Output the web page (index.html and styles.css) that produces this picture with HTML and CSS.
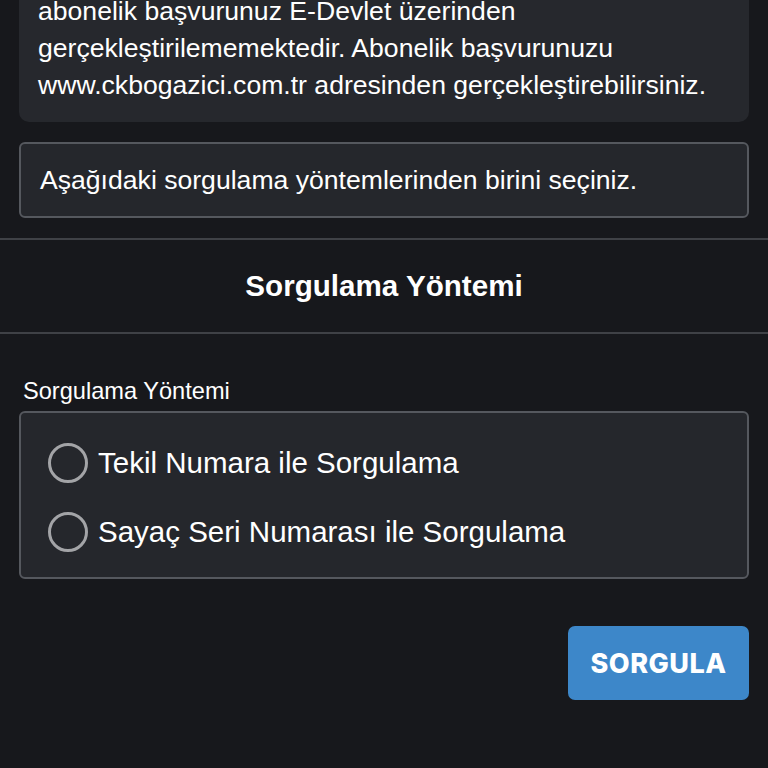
FILE: index.html
```html
<!DOCTYPE html>
<html lang="tr">
<head>
<meta charset="utf-8">
<link rel="stylesheet" href="styles.css">
</head>
<body>
<div class="page">
  <div class="notes">
    <div class="card info">abonelik başvurunuz E-Devlet üzerinden gerçekleştirilememektedir. Abonelik başvurunuzu www.ckbogazici.com.tr adresinden gerçekleştirebilirsiniz.</div>
    <div class="card hint">Aşağıdaki sorgulama yöntemlerinden birini seçiniz.</div>
  </div>
  <div class="section-head">Sorgulama Yöntemi</div>
  <div class="form">
    <div class="label">Sorgulama Yöntemi</div>
    <div class="radios">
      <label class="radio"><span class="dot"></span><span>Tekil Numara ile Sorgulama</span></label>
      <label class="radio"><span class="dot"></span><span>Sayaç Seri Numarası ile Sorgulama</span></label>
    </div>
    <div class="actions"><button class="btn">SORGULA</button></div>
  </div>
</div>
</body>
</html>
```
FILE: styles.css
```css
html, body {
  margin: 0;
  padding: 0;
  background: #17181c;
  color: #ffffff;
  font-family: "Liberation Sans", Arial, sans-serif;
  overflow: hidden;
}
.page {
  display: flex;
  flex-direction: column;
}
.notes {
  display: flex;
  flex-direction: column;
  gap: 20px;
  padding: 0 19px 20px;
  margin-top: -25px;
}
.card {
  background: #26282d;
  border-radius: 10px;
}
.info {
  padding: 18px 19px;
  font-size: 26.6px;
  line-height: 37px;
}
.hint {
  border: 2px solid #55585e;
  border-radius: 6px;
  background: #25272c;
  padding: 0 19px;
  height: 72px;
  display: flex;
  align-items: center;
  font-size: 26.6px;
}
.section-head {
  border-top: 2px solid #3f4146;
  border-bottom: 2px solid #3f4146;
  height: 92px;
  display: flex;
  align-items: center;
  justify-content: center;
  font-weight: bold;
  font-size: 29.6px;
}
.form {
  padding: 44px 19px 0;
  display: flex;
  flex-direction: column;
}
.label {
  font-size: 23.6px;
  padding-left: 4px;
  line-height: 26px;
  margin-bottom: 7px;
}
.radios {
  border: 2px solid #55585e;
  border-radius: 6px;
  background: #25272c;
  padding: 30px 0 25px 27px;
  display: flex;
  flex-direction: column;
  gap: 29px;
}
.radio {
  display: flex;
  align-items: center;
  gap: 10px;
  font-size: 29.5px;
  line-height: 40px;
}
.dot {
  width: 34px;
  height: 34px;
  border: 3px solid #a3a4a7;
  border-radius: 50%;
  flex: none;
}
.actions {
  display: flex;
  justify-content: flex-end;
  padding-top: 47px;
}
.btn {
  width: 181px;
  height: 74px;
  background: #3d87c9;
  color: #ffffff;
  border: none;
  border-radius: 7px;
  font-family: Inter, "Noto Sans", sans-serif;
  font-weight: 800;
  font-size: 27px;
  letter-spacing: 0.5px;
}
```
